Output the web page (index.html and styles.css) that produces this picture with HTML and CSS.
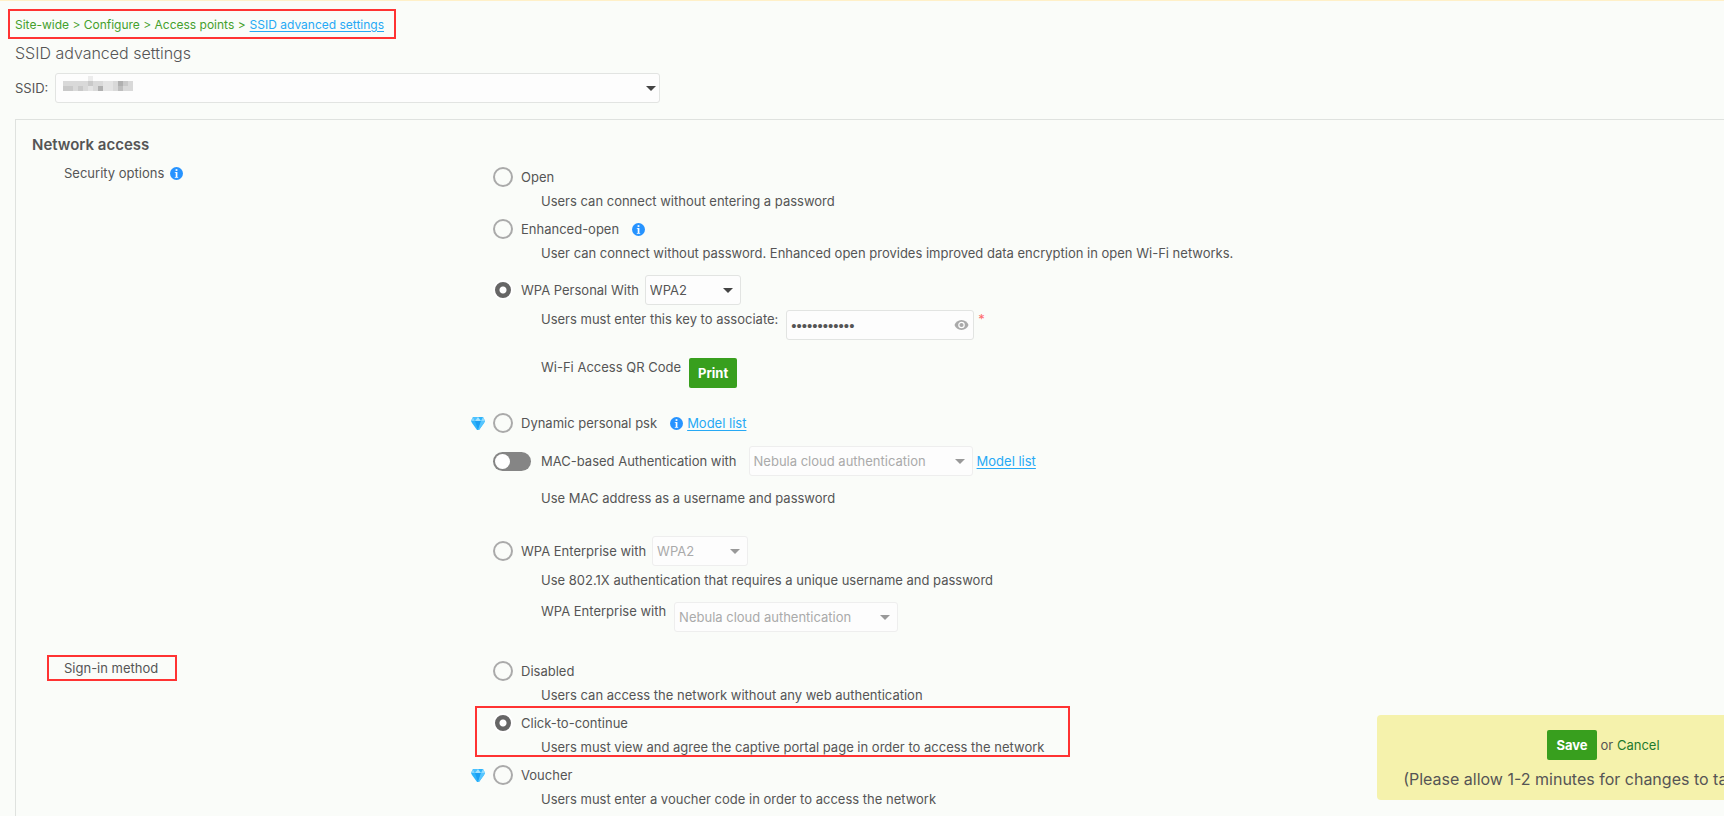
FILE: index.html
```
<!DOCTYPE html>
<html lang="en">
<head>
    <meta charset="UTF-8">
    <meta name="viewport" content="width=device-width, initial-scale=1.0">
    <title>SSID advanced settings</title>
    <link rel="stylesheet" href="styles.css">
</head>
<body>
    <!-- shared icons -->
    <svg class="sprite" aria-hidden="true">
        <symbol id="icon-info" viewBox="0 0 13 13">
            <circle cx="6.5" cy="6.5" r="6.5" fill="#2693ff"/>
            <rect x="5.6" y="2.2" width="1.8" height="1.7" fill="#fff"/>
            <path d="M4.8 5h2.6v5H8.2v.8H4.8V10h.9V5.8h-.9z" fill="#fff"/>
        </symbol>
        <symbol id="icon-diamond" viewBox="0 0 14 13">
            <path d="M2 0h10l2 4-1 2-5 7H6L1 6 0 4z" fill="#2fb4fb"/>
            <path d="M2 0L0 4h4z" fill="#7fd4ff"/>
            <path d="M2 0h5L4 4z" fill="#4cc2ff"/>
            <path d="M7 0l3 4H4z" fill="#a6e3ff"/>
            <path d="M12 0l2 4h-4z" fill="#8fdbff"/>
            <path d="M4 4h6l-3 9z" fill="#1c9ff2"/>
            <path d="M10 4h4l-1 2-5 7H7z" fill="#55c5ff"/>
        </symbol>
    </svg>

    <header class="page-header">
        <nav class="breadcrumb">
            <span>Site-wide &gt; Configure &gt; Access points &gt;</span>
            <a href="#">SSID advanced settings</a>
        </nav>
        <h1>SSID advanced settings</h1>
        <div class="ssid-row">
            <label for="ssid">SSID:</label>
            <div class="select select-ssid">
                <select id="ssid"><option></option></select>
                <svg class="ssid-mask" viewBox="0 0 14 3" preserveAspectRatio="none" shape-rendering="crispEdges" aria-hidden="true">
                    <path d="M0 1h14v2H0z" fill="#d9d9d9"/>
                    <path d="M5 0h1v1H5z" fill="#ececec"/>
                    <path d="M0 2h2v1H0zM5 1h1v1H5zM3 2h1v1H3zM12 1h1v1h-1z" fill="#c9c9c9"/>
                    <path d="M5 2h1v1H5zM8 1h2v2H8z" fill="#e4e4e4"/>
                    <path d="M7 2h1v1H7zM11 1h1v1h-1z" fill="#b0b0b0"/>
                    <path d="M11 2h1v1h-1z" fill="#bebebe"/>
                </svg>
            </div>
        </div>
    </header>

    <main class="panel">
        <h2>Network access</h2>

        <section class="field">
            <div class="field-label">
                <span>Security options</span>
                <svg class="info"><use href="#icon-info"/></svg>
            </div>
            <div class="options">
                <div class="option">
                    <div class="option-head">
                        <input type="radio" name="security" id="open">
                        <label for="open">Open</label>
                    </div>
                    <p class="desc">Users can connect without entering a password</p>
                </div>
                <div class="option">
                    <div class="option-head">
                        <input type="radio" name="security" id="enhanced">
                        <label for="enhanced">Enhanced-open</label>
                        <svg class="info"><use href="#icon-info"/></svg>
                    </div>
                    <p class="desc">User can connect without password. Enhanced open provides improved data encryption in open Wi-Fi networks.</p>
                </div>

                <div class="option option-wpa">
                    <div class="option-head">
                        <input type="radio" name="security" id="wpa" checked>
                        <label for="wpa">WPA Personal With</label>
                        <div class="select select-short">
                            <select aria-label="WPA version"><option>WPA2</option></select>
                        </div>
                    </div>
                    <div class="sub-row">
                        <label for="psk">Users must enter this key to associate:</label>
                        <div class="key">
                            <input type="password" id="psk" value="abcdefghijkl">
                            <button type="button" class="eye" aria-label="Show key">
                                <svg viewBox="0 0 14 10"><path d="M7 0C3.5 0 1 2.200 0 5c1 2.800 3.500 5 7 5s6-2.200 7-5c-1-2.800-3.500-5-7-5z" fill="#aaa"/><circle cx="7" cy="5" r="2.700" fill="none" stroke="#fff" stroke-width="1.200"/></svg>
                            </button>
                        </div>
                        <span class="required">*</span>
                    </div>
                    <div class="sub-row qr-row">
                        <span>Wi-Fi Access QR Code</span>
                        <button type="button" class="btn">Print</button>
                    </div>
                </div>

                <div class="option option-psk">
                    <div class="option-head">
                        <svg class="diamond"><use href="#icon-diamond"/></svg>
                        <input type="radio" name="security" id="dppsk">
                        <label for="dppsk">Dynamic personal psk</label>
                        <svg class="info"><use href="#icon-info"/></svg>
                        <a href="#">Model list</a>
                    </div>
                </div>

                <div class="option option-mac">
                    <div class="option-head">
                        <input type="checkbox" class="toggle" id="mac">
                        <label for="mac">MAC-based Authentication with</label>
                        <div class="select select-long">
                            <select aria-label="MAC authentication server" disabled><option>Nebula cloud authentication</option></select>
                        </div>
                        <a href="#">Model list</a>
                    </div>
                    <p class="desc">Use MAC address as a username and password</p>
                </div>

                <div class="option option-enterprise">
                    <div class="option-head">
                        <input type="radio" name="security" id="enterprise">
                        <label for="enterprise">WPA Enterprise with</label>
                        <div class="select select-short">
                            <select aria-label="WPA Enterprise version" disabled><option>WPA2</option></select>
                        </div>
                    </div>
                    <p class="desc">Use 802.1X authentication that requires a unique username and password</p>
                    <div class="sub-row">
                        <label for="radius">WPA Enterprise with</label>
                        <div class="select select-long">
                            <select id="radius" disabled><option>Nebula cloud authentication</option></select>
                        </div>
                    </div>
                </div>
            </div>
        </section>

        <section class="field">
            <div class="field-label marked">
                <span>Sign-in method</span>
            </div>
            <div class="options">
                <div class="option">
                    <div class="option-head">
                        <input type="radio" name="signin" id="disabled">
                        <label for="disabled">Disabled</label>
                    </div>
                    <p class="desc">Users can access the network without any web authentication</p>
                </div>
                <div class="option marked">
                    <div class="option-head">
                        <input type="radio" name="signin" id="click" checked>
                        <label for="click">Click-to-continue</label>
                    </div>
                    <p class="desc">Users must view and agree the captive portal page in order to access the network</p>
                </div>
                <div class="option">
                    <div class="option-head">
                        <svg class="diamond"><use href="#icon-diamond"/></svg>
                        <input type="radio" name="signin" id="voucher">
                        <label for="voucher">Voucher</label>
                    </div>
                    <p class="desc">Users must enter a voucher code in order to access the network</p>
                </div>
            </div>
        </section>
    </main>

    <div class="save-bar">
        <div class="save-actions">
            <button type="button" class="btn">Save</button>
            <span>or <a href="#">Cancel</a></span>
        </div>
        <p>(Please allow 1-2 minutes for changes to take effect.)</p>
    </div>
</body>
</html>
```
FILE: styles.css
```
*, *::before {
    box-sizing: border-box;
}

body {
    height: 100vh;
    margin: 0;
    overflow: hidden;
    border-top: 1px solid #fff0c8;
    background: #fafcf9;
    color: #555;
    font: 13px/18px Inter, "Liberation Sans", sans-serif;
}

h1, h2, p {
    margin: 0;
}

a {
    color: #26a9f5;
    text-underline-offset: 2px;
}

select, input, button {
    margin: 0;
    font: inherit;
    color: inherit;
}

.sprite {
    display: none;
}

/* header */
.page-header {
    padding: 8px 8px 16px;
}

.breadcrumb {
    display: flex;
    align-items: center;
    gap: 4px;
    width: 388px;
    height: 30px;
    padding: 2px 5px 0;
    border: 2px solid #ff3333;
    font-size: 12px;
    color: #44a02c;
    white-space: nowrap;
}

h1 {
    margin: 4px 7px 10px;
    font-size: 16px;
    line-height: 20px;
    font-weight: 300;
}

.ssid-row {
    display: flex;
    align-items: center;
    gap: 7px;
    padding-left: 7px;
}

/* selects */
.select {
    position: relative;
}

.select select {
    display: block;
    width: 100%;
    height: 30px;
    padding: 0 4px;
    border: 1px solid #e2e4e2;
    border-radius: 3px;
    background: #fdfdfd;
    appearance: none;
}

.select::after {
    content: "";
    position: absolute;
    top: 13px;
    right: 8px;
    border: 5px solid transparent;
    border-top-color: #444;
    border-bottom: 0;
    pointer-events: none;
}

.select select:disabled {
    border-color: #eee;
    color: #aaa;
    opacity: 1;
}

.select:has(:disabled)::after {
    border-top-color: #999;
}

.select-ssid {
    width: 605px;
}

.select-ssid::after {
    right: 4px;
}

.select-short {
    width: 96px;
    margin-left: -2px;
}

.select-long {
    width: 224px;
}

.ssid-mask {
    position: absolute;
    top: 3px;
    left: 8px;
    width: 70px;
    height: 15px;
}

/* panel */
.panel {
    margin-left: 15px;
    padding: 15px 16px;
    border-top: 1px solid #dfe2df;
    border-left: 1px solid #dfe2df;
}

h2 {
    font-size: 15px;
    line-height: 20px;
    font-weight: 600;
}

.field {
    display: flex;
    align-items: flex-start;
    padding-left: 32px;
}

.field-label {
    display: flex;
    align-items: center;
    gap: 6px;
    position: relative;
    height: 18px;
    margin-top: 9px;
    white-space: nowrap;
}

.options {
    margin-left: auto;
    width: calc(100% - 429px);
    padding-top: 10px;
}

.field + .field {
    padding-top: 23px;
}

.field + .field .options {
    padding-top: 0;
}

.field + .field .field-label {
    margin-top: 0;
}

.info {
    width: 13px;
    height: 13px;
}

.option {
    position: relative;
    margin-bottom: 4px;
}

.option-head {
    display: flex;
    align-items: center;
    gap: 8px;
    min-height: 24px;
}

.option-head .info {
    margin-left: 5px;
}

.desc {
    padding-left: 48px;
    line-height: 24px;
}

.sub-row {
    display: flex;
    align-items: flex-start;
    gap: 8px;
    padding-left: 48px;
}

.diamond {
    position: absolute;
    left: -22px;
    width: 14px;
    height: 13px;
}

.option-wpa,
.option-psk {
    margin-bottom: 11px;
}

.option-wpa {
    padding-top: 6px;
}

.option-wpa .sub-row {
    margin-top: 5px;
}

.option-wpa .qr-row {
    margin-top: 18px;
}

.option-psk {
    padding-top: 12px;
}

.option-psk .option-head {
    gap: 4px;
}

.option-psk label {
    margin: 0 4px;
}

.option-mac .select-long {
    margin: 0 -4px 0 4px;
}

.option-mac .desc,
.option-enterprise .sub-row {
    margin-top: 10px;
}

.option-enterprise {
    padding-top: 22px;
}

.option-enterprise .desc {
    margin-top: 2px;
}

/* red callout frames */
.marked::before {
    content: "";
    position: absolute;
    border: 2px solid #ff3333;
    pointer-events: none;
}

.field-label.marked::before {
    inset: -4px -19px -4px -17px;
}

.option.marked::before {
    top: -5px;
    left: -18px;
    width: 595px;
    height: 51px;
}

/* controls */
input[type="radio"] {
    flex: none;
    width: 20px;
    height: 20px;
    border: 2px solid #aaa;
    border-radius: 50%;
    appearance: none;
}

input[type="radio"]:checked {
    border-color: #fff;
    background: radial-gradient(circle, #fff 3px, #666 4px);
}

.toggle {
    width: 38px;
    height: 19px;
    margin-right: 2px;
    padding: 2px;
    border-radius: 10px;
    background: #858585;
    appearance: none;
}

.toggle::before {
    content: "";
    display: block;
    width: 15px;
    height: 15px;
    border-radius: 50%;
    background: #fff;
}

.key {
    position: relative;
}

.key input {
    display: block;
    width: 188px;
    height: 30px;
    padding: 0 24px 0 4px;
    border: 1px solid #e2e4e2;
    border-radius: 3px;
    background: #fdfdfd;
    font-family: "Liberation Sans", Arial, sans-serif;
    font-size: 15px;
}

.eye {
    position: absolute;
    top: 10px;
    right: 5px;
    display: flex;
    padding: 0;
    border: 0;
    background: none;
}

.eye svg {
    width: 15px;
    height: 10px;
}

.required {
    margin-left: -4px;
    color: #ff6b6b;
}

.btn {
    height: 30px;
    padding: 0 9px;
    border: 0;
    border-radius: 2px;
    background: #389f1e;
    color: #fff;
    font-weight: 700;
}

/* save bar runs past the right edge */
.save-bar {
    position: fixed;
    right: -106px;
    bottom: 16px;
    width: 453px;
    padding: 15px 0 11px;
    border-radius: 4px;
    background: #f5f2ac;
    text-align: center;
}

.save-actions {
    display: flex;
    justify-content: center;
    align-items: center;
    gap: 4px;
}

.save-actions a {
    color: #1f7a2c;
    text-decoration: none;
}

.save-bar p {
    margin-top: 9px;
    font-size: 16px;
    line-height: 20px;
}
```
